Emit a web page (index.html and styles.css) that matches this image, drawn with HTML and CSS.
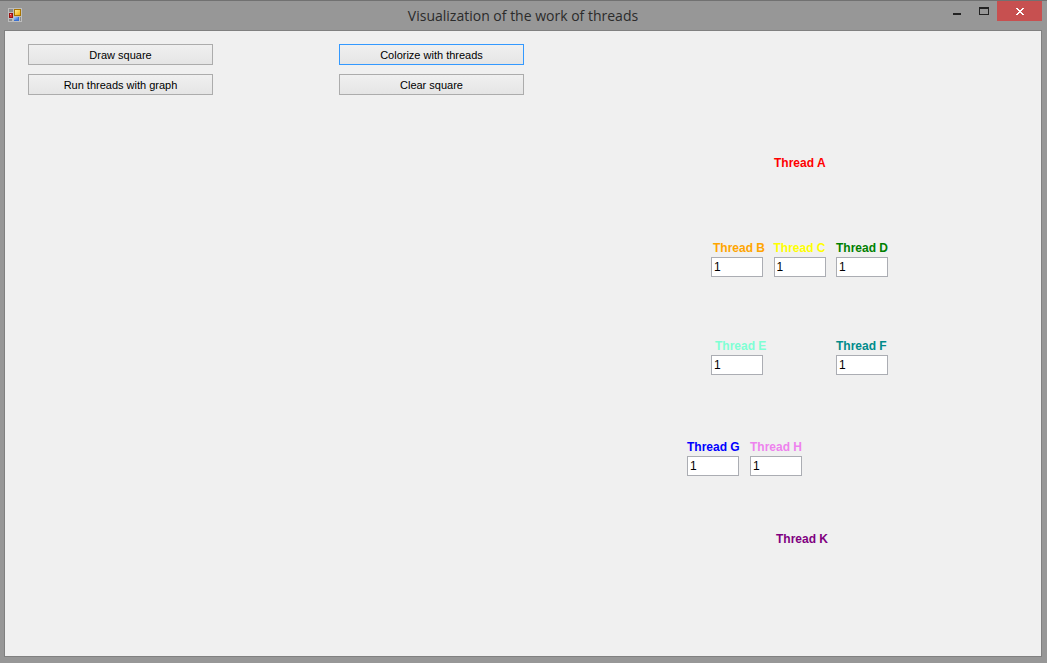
FILE: index.html
```html
<!DOCTYPE html>
<html lang="en">
<head>
<meta charset="utf-8">
<title>Visualization of the work of threads</title>
<link rel="stylesheet" href="styles.css">
</head>
<body>
<div class="window">
  <header class="titlebar">
    <svg class="app-icon" width="14" height="14" viewBox="0 0 14 14" shape-rendering="crispEdges" aria-hidden="true">
      <defs>
        <linearGradient id="gold" x2="1" y2="1"><stop stop-color="#ffe99a"/><stop offset="1" stop-color="#f0b000"/></linearGradient>
        <linearGradient id="blue" x2="1" y2="1"><stop stop-color="#a8ccff"/><stop offset="1" stop-color="#2f6fd8"/></linearGradient>
      </defs>
      <path fill="#bdbdbd" d="M0 0h14v14H0z"/>
      <path fill="#8b8b8b" d="M1 1h4v3H1zM1 11h3v2H1zM12 9h1v4h-1z"/>
      <path fill="#9a1212" d="M1 5h4v5H1z"/>
      <path fill="#d93030" d="M2 6h2v3H2z"/>
      <path fill="#f7b0a8" d="M2 6h1v1H2z"/>
      <path fill="#a87400" d="M6 1h7v7H6z"/>
      <path fill="url(#gold)" d="M7 2h5v5H7z"/>
      <path fill="#3a70cf" d="M6 9h5v4H6z"/>
      <path fill="url(#blue)" d="M6 9h4v3H6z"/>
    </svg>
    <h1 class="title">Visualization of the work of threads</h1>
    <div class="controls">
      <button class="control" type="button" aria-label="Minimize">
        <svg width="10" height="12" viewBox="0 0 10 12" shape-rendering="crispEdges"><path fill="#222" d="M1 8h8v2H1z"/></svg>
      </button>
      <button class="control" type="button" aria-label="Maximize">
        <svg width="10" height="8" viewBox="0 0 10 8" shape-rendering="crispEdges"><path fill="#222" fill-rule="evenodd" d="M0 0h10v8H0zM1 2v5h8V2z"/></svg>
      </button>
      <button class="control close" type="button" aria-label="Close">
        <svg width="8" height="7" viewBox="0 0 8 7" shape-rendering="crispEdges"><path fill="#fff" d="M0 0h2v1H0zM6 0h2v1H6zM1 1h2v1H1zM5 1h2v1H5zM2 2h4v1H2zM3 3h2v1H3zM2 4h4v1H2zM1 5h2v1H1zM5 5h2v1H5zM0 6h2v1H0zM6 6h2v1H6z"/></svg>
      </button>
    </div>
  </header>
  <main class="client">
    <div class="actions">
      <button class="action" type="button">Draw square</button>
      <button class="action focused" type="button">Colorize with threads</button>
      <button class="action" type="button">Run threads with graph</button>
      <button class="action" type="button">Clear square</button>
    </div>
    <section class="threads">
      <div class="level level-a"><span class="name a">Thread A</span></div>
      <div class="level level-bcd">
        <div class="thread"><label class="name b" for="b">Thread B</label><input class="count" id="b" type="text" value="1"></div>
        <div class="thread"><label class="name c" for="c">Thread C</label><input class="count" id="c" type="text" value="1"></div>
        <div class="thread"><label class="name d" for="d">Thread D</label><input class="count" id="d" type="text" value="1"></div>
      </div>
      <div class="level level-ef">
        <div class="thread"><label class="name e" for="e">Thread E</label><input class="count" id="e" type="text" value="1"></div>
        <div class="thread"><label class="name f" for="f">Thread F</label><input class="count" id="f" type="text" value="1"></div>
      </div>
      <div class="level level-gh">
        <div class="thread"><label class="name g" for="g">Thread G</label><input class="count" id="g" type="text" value="1"></div>
        <div class="thread"><label class="name h" for="h">Thread H</label><input class="count" id="h" type="text" value="1"></div>
      </div>
      <div class="level level-k"><span class="name k">Thread K</span></div>
    </section>
  </main>
</div>
</body>
</html>
```
FILE: styles.css
```css
* { box-sizing: border-box; }
body { margin: 0; }
.window {
  display: flex;
  flex-direction: column;
  min-height: 100vh;
  padding: 0 5px 6px 4px;
  border-top: 1px solid #717171;
  background: #979797;
  font-family: "Liberation Sans", Arial, sans-serif;
  font-size: 12px;
  color: #000;
}
.titlebar {
  display: grid;
  grid-template-columns: 1fr auto 1fr;
  height: 29px;
}
.app-icon { margin: 7px 0 0 4px; }
.title {
  margin: 0;
  font: 400 14px/30px "Open Sans", sans-serif;
  color: #2b2b2b;
}
.controls {
  display: flex;
  justify-content: flex-end;
  height: 20px;
}
.control {
  display: flex;
  align-items: center;
  justify-content: center;
  width: 27px;
  padding: 0;
  border: 0;
  background: transparent;
}
.close {
  width: 45px;
  background: #c75050;
}
.client {
  flex: 1;
  padding: 13px 23px;
  border: 1px solid #808080;
  background: #f0f0f0;
}
.actions {
  display: grid;
  grid-template-columns: 185px 185px;
  column-gap: 126px;
  row-gap: 9px;
}
.action {
  height: 21px;
  padding: 0;
  border: 1px solid #acacac;
  background: linear-gradient(#f0f0f0, #e5e5e5);
  font: inherit;
  font-size: 11px;
  line-height: 20px;
  color: inherit;
}
.focused { border-color: #3399ff; }
.threads {
  width: 201px;
  margin: 60px 0 0 659px;
}
.level { display: flex; }
.level-a { margin-bottom: 69px; padding-left: 87px; }
.level-bcd { justify-content: space-between; margin-bottom: 61px; padding-left: 24px; }
.level-ef { justify-content: space-between; margin-bottom: 64px; padding-left: 24px; }
.level-gh { gap: 11px; margin-bottom: 55px; }
.level-k { padding-left: 89px; }
.thread {
  display: flex;
  flex-direction: column;
  gap: 1px;
  width: 52px;
}
.name {
  font-weight: 700;
  line-height: 16px;
  white-space: nowrap;
}
.count {
  width: 52px;
  height: 20px;
  padding: 0 2px;
  border: 1px solid #abadb3;
  background: #fff;
  font: inherit;
  color: inherit;
}
.a { color: #ff0000; }
.b { padding-left: 2px; color: #ffa500; }
.c { color: #ffff00; }
.d { color: #008000; }
.e { padding-left: 4px; color: #7fffd4; }
.f { color: #008b8b; }
.g { color: #0000ff; }
.h { color: #ee82ee; }
.k { color: #800080; }
```
